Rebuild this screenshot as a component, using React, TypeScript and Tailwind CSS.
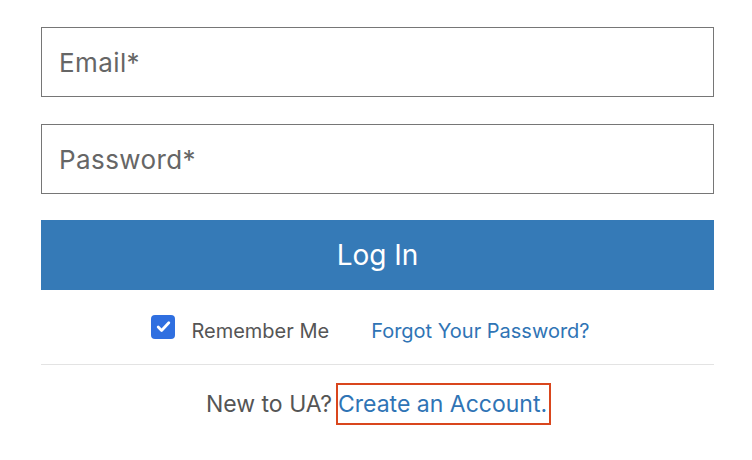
export default function App() {
  return (
    <div className="w-[752px] h-[460px] bg-white font-['Inter','Liberation_Sans',sans-serif]">
      <div className="ml-[41px] w-[673px] pt-[27px]">
        <div className="h-[70px] border border-[#767676] flex items-center pl-[17px] text-[26px] tracking-[0.4px] text-[#666]">
          Email*
        </div>
        <div className="mt-[27px] h-[70px] border border-[#767676] flex items-center pl-[17px] text-[26px] tracking-[0.4px] text-[#666]">
          Password*
        </div>
        <button className="mt-[26px] w-full h-[70px] bg-[#357ab7] text-white text-[28px] flex items-center justify-center">
          Log In
        </button>
        <div className="h-[75px] flex items-center justify-center border-b border-[#e3e3e3] pr-[14px]">
          <span className="shrink-0 w-[24px] h-[24px] rounded-[4px] bg-[#2f6fe0] flex items-center justify-center mr-[16px] -mt-[1px]">
            <svg width="17" height="17" viewBox="0 0 16 16" fill="none">
              <path d="M3 8.5l3.2 3.2L13 4.5" stroke="white" strokeWidth="2.6" strokeLinecap="round" strokeLinejoin="round" />
            </svg>
          </span>
          <span className="text-[20px] text-[#555] mt-[8px]">Remember Me</span>
          <span className="ml-[42px] text-[20px] text-[#2f74b5] mt-[8px]">Forgot Your Password?</span>
        </div>
        <div className="flex justify-center items-center pt-[18px] pl-[2px]">
          <span className="text-[23px] text-[#555] mr-[4px]">New to UA?</span>
          <span className="border-2 border-[#d9461d] h-[42px] pr-[2px] flex items-center text-[23px] text-[#2f74b5]">
            Create an Account.
          </span>
        </div>
      </div>
    </div>
  );
}
